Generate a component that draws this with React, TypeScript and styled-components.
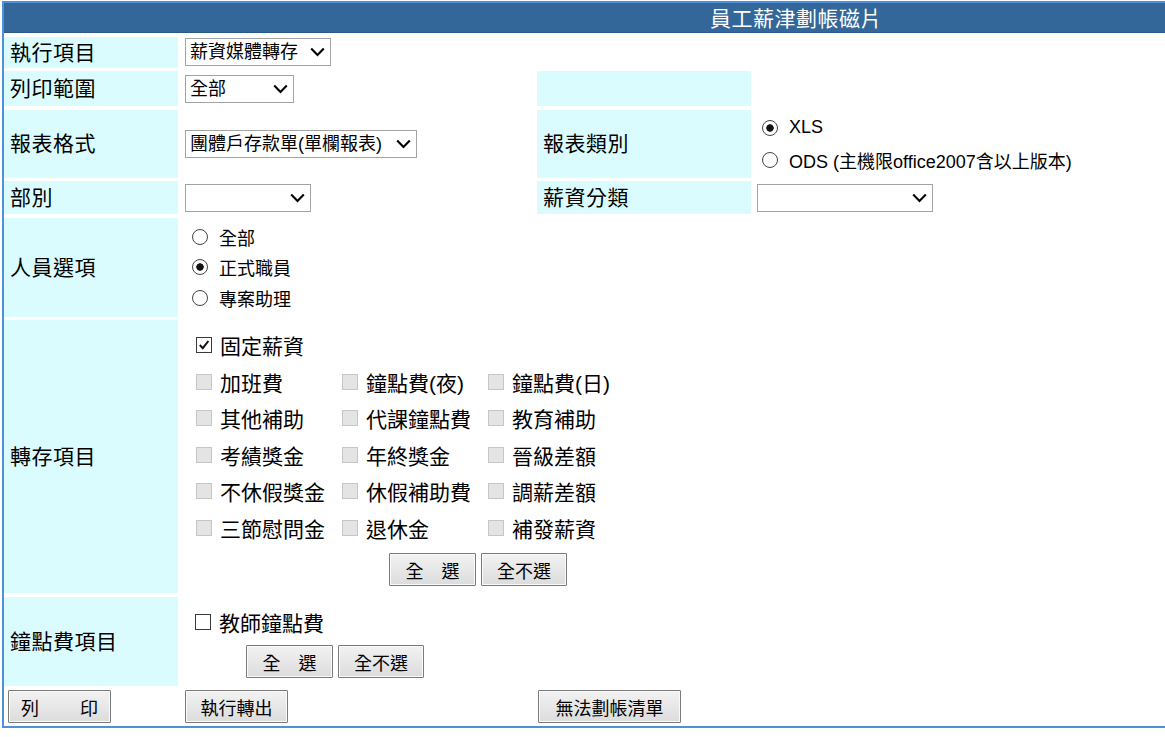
import React from 'react';
import styled, { createGlobalStyle } from 'styled-components';

const FONT = `"Liberation Sans", "Noto Sans CJK TC", sans-serif`;

const GlobalStyle = createGlobalStyle`
  html, body {
    margin: 0;
    padding: 0;
    background: #ffffff;
    overflow: hidden;
  }
  body {
    font-family: ${FONT};
    color: #000;
  }
`;

const Frame = styled.div`
  width: 1584px;
  margin: 1px 0 0 2px;
  border: 2px solid #4f8fdc;
  padding-bottom: 2px;
  display: grid;
  grid-template-columns: 174px 351px 214px 833px;
  grid-template-rows: 30px 31px 35px 68px 33px 99px 273px 89px 35px;
  column-gap: 4px;
  row-gap: 3.5px;
`;

const TitleBar = styled.div`
  grid-column: 1 / -1;
  background: #336699;
  box-shadow: inset 0 -1px 0 #2a5987;
  color: #ffffff;
  font-size: 21px;
  display: flex;
  align-items: center;
  justify-content: center;
  letter-spacing: 0.5px;
  padding-bottom: 2px;
`;

const LabelCell = styled.div`
  background: #dbfcff;
  display: flex;
  align-items: center;
  padding: 0 0 3px 6px;
  font-size: 21px;
  letter-spacing: 0.5px;
`;

const ValueCell = styled.div<{ $span?: number; $pad?: number }>`
  grid-column: span ${(p) => p.$span ?? 1};
  display: flex;
  align-items: center;
  padding-left: ${(p) => p.$pad ?? 3}px;
`;

const SelectWrap = styled.span<{ $w: number }>`
  position: relative;
  display: inline-block;
  width: ${(p) => p.$w}px;
  height: 28px;
`;

const SelectBox = styled.select`
  appearance: none;
  width: 100%;
  height: 100%;
  border: 1px solid #a3a3a3;
  border-radius: 0;
  background: #ffffff;
  color: #000;
  font-family: ${FONT};
  font-size: 18px;
  padding: 0 24px 0 4px;
  outline: none;
`;

const Chevron = styled.svg`
  position: absolute;
  right: 6px;
  top: 50%;
  transform: translateY(-50%);
  pointer-events: none;
`;

const OptionStack = styled.div<{ $step: number }>`
  display: flex;
  flex-direction: column;
  > * {
    height: ${(p) => p.$step}px;
  }
`;

const RadioLabel = styled.label`
  display: flex;
  align-items: center;
  gap: 11px;
  font-size: 18px;
`;

const RadioDot = styled.span<{ $on?: boolean }>`
  width: 14px;
  height: 14px;
  border: 1px solid #444;
  border-radius: 50%;
  background: ${(p) =>
    p.$on ? 'radial-gradient(circle, #111 0 3.4px, #fff 4px)' : '#fff'};
  flex: none;
`;

const CheckLabel = styled.label`
  display: flex;
  align-items: center;
  gap: 8px;
  font-size: 21px;
  white-space: nowrap;
`;

const CheckBox = styled.span<{ $disabled?: boolean }>`
  width: 14px;
  height: 14px;
  border: 1px solid ${(p) => (p.$disabled ? '#c6c6c6' : '#3a3a3a')};
  background: ${(p) => (p.$disabled ? '#e4e4e4' : '#ffffff')};
  display: inline-flex;
  align-items: center;
  justify-content: center;
  flex: none;
`;

const Section = styled.div`
  display: flex;
  flex-direction: column;
`;

const CheckGrid = styled.div`
  display: grid;
  grid-template-columns: repeat(3, 146px);
  grid-auto-rows: 36.5px;
  > :first-child {
    grid-column: 1 / -1;
  }
`;

const CheckRow = styled.div`
  height: 36.5px;
  display: flex;
  align-items: center;
`;

const ButtonRow = styled.div<{ $indent: number; $top: number }>`
  display: flex;
  gap: 5px;
  margin-top: ${(p) => p.$top}px;
  padding-left: ${(p) => p.$indent}px;
`;

const Button = styled.button<{ $w: number }>`
  width: ${(p) => p.$w}px;
  height: 33px;
  padding: 0;
  border: 1px solid #7a7a7a;
  border-radius: 1px;
  background: linear-gradient(#f2f2f2, #dcdcdc);
  box-shadow: inset 0 0 0 1px #fafafa;
  font-family: ${FONT};
  font-size: 18px;
  color: #000;
  white-space: pre;
`;

function Select({ w, value }: { w: number; value: string }) {
  return (
    <SelectWrap $w={w}>
      <SelectBox defaultValue={value}>
        <option value={value}>{value}</option>
      </SelectBox>
      <Chevron width="15" height="10" viewBox="0 0 15 10">
        <path d="M1.2 1.5 L7.5 8 L13.8 1.5" fill="none" stroke="#000" strokeWidth="2.1" />
      </Chevron>
    </SelectWrap>
  );
}

function Radio({ label, on }: { label: string; on?: boolean }) {
  return (
    <RadioLabel>
      <RadioDot $on={on} />
      {label}
    </RadioLabel>
  );
}

function Check({ label, checked, disabled }: { label: string; checked?: boolean; disabled?: boolean }) {
  return (
    <CheckLabel>
      <CheckBox $disabled={disabled}>
        {checked && (
          <svg width="12" height="12" viewBox="0 0 12 12">
            <path d="M1.8 6 L4.8 9.2 L10.4 2" fill="none" stroke="#111" strokeWidth="2" />
          </svg>
        )}
      </CheckBox>
      {label}
    </CheckLabel>
  );
}

const transferItems = [
  '加班費', '鐘點費(夜)', '鐘點費(日)',
  '其他補助', '代課鐘點費', '教育補助',
  '考績獎金', '年終獎金', '晉級差額',
  '不休假獎金', '休假補助費', '調薪差額',
  '三節慰問金', '退休金', '補發薪資',
];

export default function App() {
  return (
    <>
      <GlobalStyle />
      <Frame>
        <TitleBar>員工薪津劃帳磁片</TitleBar>

        <LabelCell>執行項目</LabelCell>
        <ValueCell $span={3}>
          <Select w={146} value="薪資媒體轉存" />
        </ValueCell>

        <LabelCell>列印範圍</LabelCell>
        <ValueCell>
          <Select w={109} value="全部" />
        </ValueCell>
        <LabelCell />
        <ValueCell />

        <LabelCell>報表格式</LabelCell>
        <ValueCell>
          <Select w={232} value="團體戶存款單(單欄報表)" />
        </ValueCell>
        <LabelCell>報表類別</LabelCell>
        <ValueCell $pad={7}>
          <OptionStack $step={32}>
            <Radio label="XLS" on />
            <Radio label="ODS (主機限office2007含以上版本)" />
          </OptionStack>
        </ValueCell>

        <LabelCell>部別</LabelCell>
        <ValueCell>
          <Select w={126} value="" />
        </ValueCell>
        <LabelCell>薪資分類</LabelCell>
        <ValueCell $pad={2}>
          <Select w={176} value="" />
        </ValueCell>

        <LabelCell>人員選項</LabelCell>
        <ValueCell $span={3} $pad={10}>
          <OptionStack $step={30.5}>
            <Radio label="全部" />
            <Radio label="正式職員" on />
            <Radio label="專案助理" />
          </OptionStack>
        </ValueCell>

        <LabelCell>轉存項目</LabelCell>
        <ValueCell $span={3} $pad={14}>
          <Section>
            <CheckGrid>
              <Check label="固定薪資" checked />
              {transferItems.map((item) => (
                <Check key={item} label={item} disabled />
              ))}
            </CheckGrid>
            <ButtonRow $indent={193} $top={7}>
              <Button $w={87}>{'全\u3000選'}</Button>
              <Button $w={86}>全不選</Button>
            </ButtonRow>
          </Section>
        </ValueCell>

        <LabelCell>鐘點費項目</LabelCell>
        <ValueCell $span={3} $pad={13}>
          <Section>
            <CheckRow>
              <Check label="教師鐘點費" />
            </CheckRow>
            <ButtonRow $indent={51} $top={5}>
              <Button $w={87}>{'全\u3000選'}</Button>
              <Button $w={86}>全不選</Button>
            </ButtonRow>
          </Section>
        </ValueCell>

        <ValueCell $pad={4}>
          <Button $w={103}>{'列\u3000\u3000 印'}</Button>
        </ValueCell>
        <ValueCell>
          <Button $w={103}>執行轉出</Button>
        </ValueCell>
        <ValueCell $pad={1}>
          <Button $w={143}>無法劃帳清單</Button>
        </ValueCell>
        <ValueCell />
      </Frame>
    </>
  );
}
